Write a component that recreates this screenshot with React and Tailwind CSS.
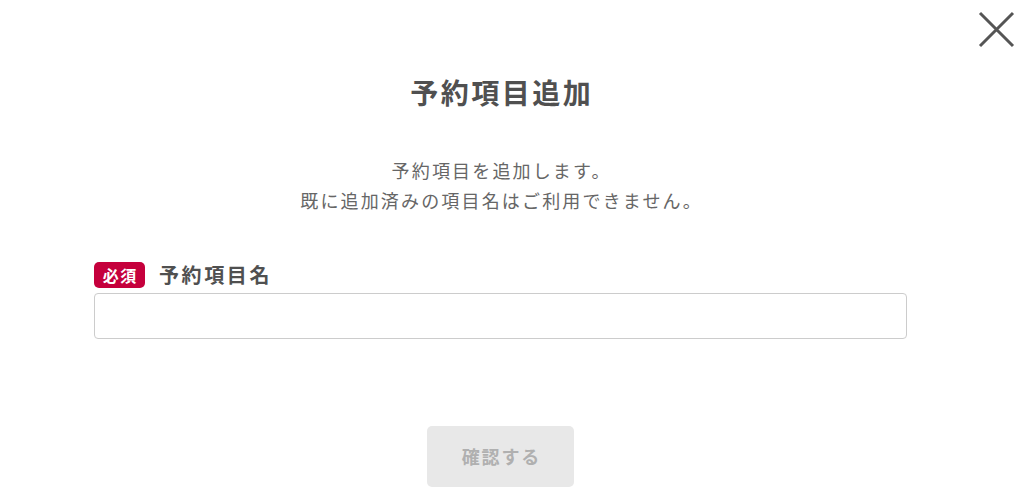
export default function App() {
  return (
    <div
      className="relative w-[1024px] h-[496px] bg-white overflow-hidden"
      style={{ fontFamily: '"Noto Sans CJK JP", "Noto Sans", sans-serif' }}
    >
      {/* close */}
      <button className="absolute left-[978px] top-[11px] w-[37px] h-[37px]" aria-label="close">
        <svg viewBox="0 0 37 37" className="w-full h-full">
          <path d="M2 2 L35 35 M35 2 L2 35" stroke="#555" strokeWidth="3" strokeLinecap="butt" fill="none" />
        </svg>
      </button>

      <div className="ml-[94px] w-[813px] flex flex-col items-center pt-[72px]">
        <h1 className="text-[28px] leading-[40px] font-bold text-[#505050] tracking-[0.09em] pl-[0.09em]">予約項目追加</h1>

        <p className="mt-[43px] text-[18px] leading-[30px] text-[#666] tracking-[0.12em] pl-[0.12em] text-center">
          予約項目を追加します。
          <br />
          既に追加済みの項目名はご利用できません。
        </p>

        <div className="mt-[47px] w-full">
          <div className="flex items-center gap-[14px] h-[26px]">
            <span className="inline-flex items-center justify-center w-[51px] h-[26px] rounded-[5px] bg-[#c5003c] text-white text-[16px] font-bold tracking-[0.1em] pl-[0.1em] leading-none">
              必須
            </span>
            <span className="text-[20px] font-bold text-[#505050] tracking-[0.13em] leading-none">予約項目名</span>
          </div>
          <input
            type="text"
            className="mt-[5px] block w-full h-[46px] border border-[#cccccc] rounded-[4px] px-3 text-[16px] outline-none"
          />
        </div>

        <button
          disabled
          className="mt-[87px] w-[147px] h-[61px] rounded-[5px] bg-[#e8e8e8] text-[#b0b0b0] text-[18px] font-bold tracking-[0.1em] pl-[0.1em]"
        >
          確認する
        </button>
      </div>
    </div>
  )
}
